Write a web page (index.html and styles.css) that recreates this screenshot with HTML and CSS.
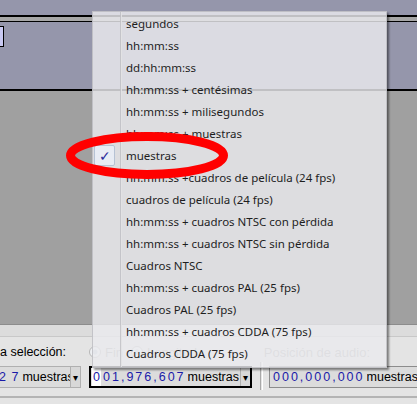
FILE: index.html
```html
<!DOCTYPE html>
<html lang="es">
<head>
<meta charset="utf-8">
<link rel="stylesheet" href="styles.css">
</head>
<body>
<div class="screen">
  <div class="band-top"></div>
  <div class="line-black2"></div>
  <div class="band-grey"></div>
  <div class="line-black1"></div>
  <div class="track"><div class="clip"></div></div>
  <div class="line-black2"></div>
  <div class="empty"></div>
  <div class="bar"></div>
  <div class="toolbar">
    <div class="labels">
      <span class="lbl-sel">a selección:</span>
      <span class="radio"><span class="dot"></span>Fin</span>
      <span class="radio r2"><span class="dot"></span>Longitud</span>
      <span class="lbl-audio">Posición de audio:</span>
    </div>
    <div class="fields">
      <div class="field f1"><span class="digits">2 7</span><span class="unit">muestras</span><span class="arrow">▾</span></div>
      <div class="field f2"><span class="cur">0</span><span class="digits">01,976,607</span><span class="unit">muestras</span><span class="arrow">▾</span></div>
      <div class="sep"></div>
      <div class="field f3"><span class="digits">000,000,000</span><span class="unit">muestras</span></div>
    </div>
    <div class="bottom-line"></div>
  </div>

  <div class="menu">
    <div class="gutter"></div>
    <div class="item">segundos</div>
    <div class="item">hh:mm:ss</div>
    <div class="item">dd:hh:mm:ss</div>
    <div class="item">hh:mm:ss + centésimas</div>
    <div class="item">hh:mm:ss + milisegundos</div>
    <div class="item">hh:mm:ss + muestras</div>
    <div class="item checked"><span class="check">✓</span>muestras</div>
    <div class="item">hh:mm:ss +cuadros de película (24 fps)</div>
    <div class="item">cuadros de película (24 fps)</div>
    <div class="item">hh:mm:ss + cuadros NTSC con pérdida</div>
    <div class="item">hh:mm:ss + cuadros NTSC sin pérdida</div>
    <div class="item">Cuadros NTSC</div>
    <div class="item">hh:mm:ss + cuadros PAL (25 fps)</div>
    <div class="item">Cuadros PAL (25 fps)</div>
    <div class="item">hh:mm:ss + cuadros CDDA (75 fps)</div>
    <div class="item">Cuadros CDDA (75 fps)</div>
  </div>

  <svg class="ring" width="170" height="56" viewBox="0 0 170 56">
    <ellipse cx="81" cy="27.5" rx="76.5" ry="19" fill="none" stroke="#ff0000" stroke-width="9"/>
  </svg>
</div>
</body>
</html>
```
FILE: styles.css
```css
html, body {
  margin: 0;
  padding: 0;
}
body {
  width: 417px;
  height: 404px;
  overflow: hidden;
  background: #a0a0a0;
  font-family: "Liberation Sans", Arial, sans-serif;
}
.screen {
  position: relative;
  width: 417px;
  height: 404px;
  display: flex;
  flex-direction: column;
  overflow: hidden;
}
.band-top { height: 15px; background: #9596ab; }
.line-black2 { height: 2px; background: #000; }
.line-black1 { height: 1px; background: #000; }
.band-grey { height: 4px; background: #a6a6a6; }
.track {
  height: 67px;
  background: #9596ab;
  padding-top: 4px;
  box-sizing: border-box;
}
.clip {
  width: 3px;
  height: 19px;
  background: #c9c9f2;
  border: 1px solid #000;
  border-left: none;
}
.empty { height: 233px; background: #a0a0a0; }
.bar {
  height: 11px;
  background: #dcdcdc;
  border-top: 1px solid #8c8c8c;
  border-bottom: 1px solid #c8c8c8;
}
.toolbar {
  flex: 1;
  background: #e4e4e4;
  display: flex;
  flex-direction: column;
}
.labels {
  height: 26px;
  display: flex;
  align-items: center;
  font-size: 13px;
  color: #000;
  padding-top: 4px;
  box-sizing: border-box;
}
.lbl-sel { width: 89px; font-size: 12.5px; }
.radio {
  display: flex;
  align-items: center;
  color: #a8a8a8;
  gap: 4px;
}
.radio.r2 { margin-left: 8px; }
.dot {
  width: 10px;
  height: 10px;
  border-radius: 50%;
  border: 1px solid #b8b8b8;
  background: radial-gradient(circle, #c4cbd6 0 2px, #eef0f3 3px);
}
.lbl-audio { margin-left: auto; margin-right: 47px; color: #a8a8a8; }
.fields {
  height: 22px;
  display: flex;
  align-items: stretch;
  margin-top: 3px;
}
.field {
  display: flex;
  align-items: center;
  box-sizing: border-box;
  font-size: 12.5px;
  white-space: nowrap;
  overflow: hidden;
}
.digits {
  color: #1a1aa8;
  letter-spacing: 2px;
  margin-right: 2px;
  flex-shrink: 0;
}
.unit { color: #000; flex-shrink: 1; overflow: hidden; }
.arrow {
  flex-shrink: 0;
  width: 9px;
  align-self: stretch;
  display: flex;
  align-items: center;
  justify-content: center;
  background: #d8d8d8;
  border-left: 1px solid #b0b0b0;
  font-size: 10px;
  color: #000;
  margin-left: auto;
}
.f1 {
  width: 81px;
  border: 1px solid #b0b0b0;
  border-left: none;
  background: #dcdcdc;
}
.f1 .digits { letter-spacing: 1px; margin-left: -1px; margin-right: 3px; white-space: pre; }
.f2 {
  width: 163px;
  margin-left: 8px;
  border: 2px solid #000;
  background: #dcdcdc;
  padding-left: 1px;
}
.cur {
  align-self: stretch;
  display: flex;
  align-items: center;
  justify-content: center;
  width: 9px;
  background: #fff;
  color: #1a1aa8;
  margin-right: 2px;
  flex-shrink: 0;
}
.sep {
  width: 3px;
  margin: 0 6px 0 8px;
  border-left: 1px solid #a8a8a8;
  border-right: 1px solid #fff;
  box-sizing: border-box;
  margin-top: -4px;
  margin-bottom: -2px;
}
.f3 {
  flex: 1;
  border: 1px solid #8c8c8c;
  border-right: none;
  background: #dcdcdc;
  padding-left: 3px;
}
.bottom-line {
  margin-top: 8px;
  height: 2px;
  background: #b4b4b4;
}

.menu {
  position: absolute;
  left: 92px;
  top: 11px;
  width: 295px;
  height: 357px;
  box-sizing: border-box;
  padding-top: 1px;
  background: rgba(234, 234, 238, 0.82);
  border: 1px solid rgba(180, 180, 185, 0.7);
  box-shadow: 2px 2px 2px rgba(0, 0, 0, 0.45);
  font-family: "Noto Sans", "Open Sans", sans-serif;
  font-size: 11.5px;
  color: #1e1e1e;
}
.gutter {
  position: absolute;
  left: 27px;
  top: 0;
  bottom: 0;
  width: 1px;
  background: rgba(190, 190, 195, 0.8);
  border-right: 1px solid rgba(255, 255, 255, 0.5);
}
.item {
  position: relative;
  height: 22px;
  line-height: 22px;
  padding-left: 33px;
  white-space: nowrap;
}
.check {
  position: absolute;
  left: 1px;
  top: 0;
  width: 19px;
  height: 19px;
  border: 1px solid #b6c2d4;
  border-radius: 2px;
  background: #e8ecf4;
  color: #2a2a9a;
  font-size: 14px;
  line-height: 19px;
  text-align: center;
}
.ring {
  position: absolute;
  left: 66px;
  top: 128px;
}
```
